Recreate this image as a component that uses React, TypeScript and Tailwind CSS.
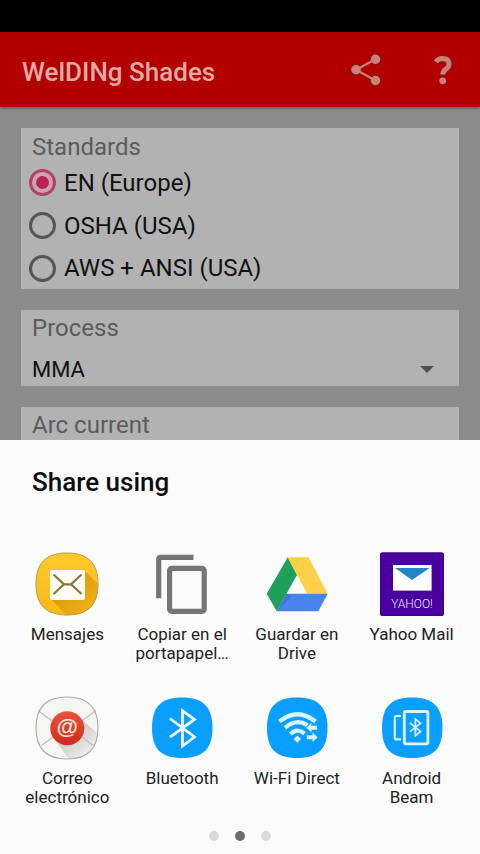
import { useState } from 'react';
import type { ReactNode } from 'react';

const SQUIRCLE = 'M32 1 C53 1 63 11 63 32 C63 53 53 63 32 63 C11 63 1 53 1 32 C1 11 11 1 32 1 Z';
const TILE = 'M32 1.5 C53 1.5 62.5 11 62.5 32 C62.5 53 53 62 32 62 C11 62 2 53 2 32 C2 11 11 1.5 32 1.5 Z';

const standards = ['EN (Europe)', 'OSHA (USA)', 'AWS + ANSI (USA)'];

function MessagesIcon() {
  return (
    <svg viewBox="0 0 64 64" className="size-16" aria-hidden="true">
      <defs>
        <clipPath id="msg-clip">
          <path d={SQUIRCLE} />
        </clipPath>
        <linearGradient id="msg-bg" x1="0" y1="0" x2="0" y2="1">
          <stop offset="0" stopColor="#fecb2c" />
          <stop offset="1" stopColor="#f7b916" />
        </linearGradient>
        <linearGradient id="msg-shade" x1="0" y1="0" x2="1" y2="1">
          <stop offset="0.3" stopColor="#dc9c0c" />
          <stop offset="1" stopColor="#f7b916" />
        </linearGradient>
      </defs>
      <path d={SQUIRCLE} fill="url(#msg-bg)" />
      <path d="M50 19 L66 35 V66 H34 L16 47 Z" fill="url(#msg-shade)" clipPath="url(#msg-clip)" />
      <path d={SQUIRCLE} fill="none" stroke="#b99a4c" strokeWidth="1" />
      <rect x="15" y="18" width="35" height="30" rx="2" fill="#fffdf3" />
      <path
        d="M18.5 22.5 L29 32.3 H36 L46.5 22.5 M29 32.3 L18.5 42 M36 32.3 L46.5 42"
        fill="none"
        stroke="#85783a"
        strokeWidth="2.2"
      />
    </svg>
  );
}

function CopyIcon() {
  return (
    <svg viewBox="0 0 64 64" className="size-16" aria-hidden="true" fill="none" stroke="#757575" strokeWidth="5.2">
      <path d="M43.5 5.3 H11 Q8.7 5.3 8.7 7.6 V46.3" />
      <rect x="19.6" y="16.4" width="34.6" height="43" rx="2.2" />
    </svg>
  );
}

function DriveIcon() {
  return (
    <svg viewBox="0 0 64 64" className="size-16" aria-hidden="true">
      <path d="M22.7 5.3 L32 23 L11.7 59.2 L1.7 41.7 Z" fill="#1fa15d" />
      <path d="M22.7 5.3 H43.5 L62.7 41.7 H42.3 Z" fill="#fecf49" />
      <path d="M21.5 41.7 H62.7 L53.3 59.2 H11.7 Z" fill="#4883ee" />
      <path d="M21.5 41.7 L27 44 L11.7 59.2 Z" fill="#2d5fc0" opacity="0.35" />
    </svg>
  );
}

function YahooIcon() {
  return (
    <svg viewBox="0 0 64 64" className="size-16" aria-hidden="true">
      <rect x="0" y="0.4" width="64" height="63.6" rx="2" fill="#4a00a0" />
      <rect x="0.7" y="1" width="62.6" height="62.4" rx="2" fill="none" stroke="#3a0580" />
      <rect x="13" y="13" width="38.6" height="25.6" fill="#fff" />
      <path d="M15 16 H49.5 L32 28 Z" fill="#1c86c8" />
      <text x="32" y="56" textAnchor="middle" fill="#f1e6fa" className="font-['Roboto'] text-[12px] font-light">
        YAHOO!
      </text>
    </svg>
  );
}

function EmailIcon() {
  return (
    <svg viewBox="0 0 64 64" className="size-16" aria-hidden="true">
      <defs>
        <clipPath id="mail-clip">
          <path d={SQUIRCLE} />
        </clipPath>
        <linearGradient id="mail-dot" x1="0" y1="0" x2="0" y2="1">
          <stop offset="0" stopColor="#e8543a" />
          <stop offset="1" stopColor="#cf2a1c" />
        </linearGradient>
        <linearGradient id="mail-shade" x1="0" y1="0" x2="1" y2="1">
          <stop offset="0.4" stopColor="#cfcfcd" />
          <stop offset="0.85" stopColor="#f5f5f4" />
        </linearGradient>
      </defs>
      <path d={SQUIRCLE} fill="#f5f5f4" />
      <path d="M46 23 L66 40 V66 H36 L20 44 Z" fill="url(#mail-shade)" clipPath="url(#mail-clip)" />
      <path d="M3 14.5 L20 27 M61 14.5 L44 27 M6.5 49.5 L22 38 M58 49.5 L43 38" stroke="#bdbdbd" strokeWidth="1.1" />
      <path d={SQUIRCLE} fill="none" stroke="#adadab" strokeWidth="1.2" />
      <circle cx="32.3" cy="32.3" r="17" fill="url(#mail-dot)" />
      <text x="32.3" y="38" textAnchor="middle" fill="#fde3dc" className="font-['Liberation_Sans'] text-[22px] font-bold">
        @
      </text>
    </svg>
  );
}

function BluetoothIcon() {
  return (
    <svg viewBox="0 0 64 64" className="size-16" aria-hidden="true">
      <path d={TILE} fill="#0a9fff" />
      <path
        d="M20 22.5 L44.5 41 L32.5 50 V14.7 L44.5 23.5 L20 41.2"
        fill="none"
        stroke="#eefaff"
        strokeWidth="2.8"
      />
    </svg>
  );
}

function WifiDirectIcon() {
  return (
    <svg viewBox="0 0 64 64" className="size-16" aria-hidden="true">
      <path d={TILE} fill="#0a9fff" />
      <g fill="none" stroke="#d9f4ff" strokeWidth="4.2">
        <path d="M14.5 25.5 Q32.3 11 50.5 25.5" />
        <path d="M20 31.8 Q31.5 22 42.5 29.2" />
        <path d="M25.5 38 Q32.3 31.5 39.5 37.6" />
      </g>
      <g fill="#d9f4ff">
        <path d="M32.3 39.5 L36 43 L32.3 46.8 L28.6 43 Z" />
        <path d="M41.3 31.7 L46.5 27 V29.7 H52 V33.7 H46.5 V36.4 Z" />
        <path d="M52.7 41.3 L47.5 36.6 V39.3 H41.8 V43.3 H47.5 V46 Z" />
      </g>
    </svg>
  );
}

function BeamIcon() {
  return (
    <svg viewBox="0 0 64 64" className="size-16" aria-hidden="true">
      <path d={TILE} fill="#0a9fff" />
      <g fill="none" stroke="#d9f4ff">
        <rect x="24.3" y="15.5" width="23.6" height="32.4" rx="1.8" strokeWidth="2.8" />
        <path d="M21 20 H16.5 Q14.8 20 14.8 21.7 V41.7 Q14.8 43.4 16.5 43.4 H21" strokeWidth="2.2" />
        <path d="M30 27 L40.5 35.4 L35.4 39.7 V23 L40.5 27.2 L30 35.6" strokeWidth="1.7" />
      </g>
    </svg>
  );
}

function AppBar() {
  return (
    <header className="relative z-10 flex h-[75px] shrink-0 items-center bg-[#b20000] pr-5 pl-[22px] shadow-[0_1px_3px_rgba(0,0,0,0.4)]">
      <h1 className="flex-1 pt-1 text-[26px] leading-8 font-medium text-[#dfaaa3]">WelDINg Shades</h1>
      <button type="button" aria-label="Share" className="mr-10 size-9">
        <svg viewBox="0 0 36 36" className="size-9">
          <g stroke="#7d1a15" strokeWidth="1.6" fill="#cf7d76">
            <circle cx="27.5" cy="7.3" r="5.2" />
            <circle cx="8" cy="17.7" r="5.2" />
            <circle cx="27.5" cy="28.5" r="5.2" />
          </g>
          <path d="M27.5 7.3 L8 17.7 L27.5 28.5" fill="none" stroke="#cf7d76" strokeWidth="2.4" />
          <g fill="#cf7d76">
            <circle cx="27.5" cy="7.3" r="4.7" />
            <circle cx="8" cy="17.7" r="4.7" />
            <circle cx="27.5" cy="28.5" r="4.7" />
          </g>
        </svg>
      </button>
      <button type="button" aria-label="Help" className="size-9">
        <svg viewBox="0 0 36 36" className="size-9" fill="none">
          <path d="M11.5 10 Q14 6.6 18.3 6.6 Q25 6.6 25 12 Q25 15 22 17 Q18.8 19.3 18.8 23" stroke="#7d1a15" strokeWidth="6.8" />
          <circle cx="18.7" cy="28.8" r="4.3" fill="#7d1a15" />
          <path d="M12 10 Q14 6.6 18.3 6.6 Q25 6.6 25 12 Q25 15 22 17 Q18.8 19.3 18.8 22.6" stroke="#cf7d76" strokeWidth="5" />
          <circle cx="18.7" cy="28.8" r="3.4" fill="#cf7d76" />
        </svg>
      </button>
    </header>
  );
}

const targets: { name: string; lines: string[]; icon: ReactNode }[] = [
  { name: 'messages', lines: ['Mensajes'], icon: <MessagesIcon /> },
  { name: 'clipboard', lines: ['Copiar en el', 'portapapel…'], icon: <CopyIcon /> },
  { name: 'drive', lines: ['Guardar en', 'Drive'], icon: <DriveIcon /> },
  { name: 'yahoo', lines: ['Yahoo Mail'], icon: <YahooIcon /> },
  { name: 'email', lines: ['Correo', 'electrónico'], icon: <EmailIcon /> },
  { name: 'bluetooth', lines: ['Bluetooth'], icon: <BluetoothIcon /> },
  { name: 'wifi', lines: ['Wi-Fi Direct'], icon: <WifiDirectIcon /> },
  { name: 'beam', lines: ['Android', 'Beam'], icon: <BeamIcon /> },
];

function ShareSheet() {
  const page = 1;

  return (
    <section className="relative z-20 shrink-0 bg-[#fbfbfb] pt-[26px] pr-[11px] pb-[13px] pl-[10px]">
      <h2 className="pl-[22px] text-[26px] leading-8 font-medium text-[#0c0c0c]">Share using</h2>
      <div className="mt-[54px] grid grid-cols-4 gap-y-[33px]">
        {targets.map((target) => (
          <button key={target.name} type="button" className="flex flex-col items-center">
            {target.icon}
            <span className="mt-[9px] block h-[38px] text-[17px] leading-[19px] text-[#222]">
              {target.lines.map((line) => (
                <span key={line} className="block">
                  {line}
                </span>
              ))}
            </span>
          </button>
        ))}
      </div>
      <div className="mt-6 flex justify-center gap-4">
        {[0, 1, 2].map((dot) => (
          <span key={dot} className={`size-[10px] rounded-full ${dot === page ? 'bg-[#6b6b6b]' : 'bg-[#dadada]'}`} />
        ))}
      </div>
    </section>
  );
}

export default function App() {
  const [standard, setStandard] = useState(standards[0]);

  return (
    <div className="flex h-screen flex-col overflow-hidden bg-[#8b8b8b] font-['Roboto',sans-serif]">
      <div className="h-8 shrink-0 bg-black" />
      <AppBar />

      <main className="flex min-h-0 flex-1 flex-col gap-[21px] overflow-hidden p-[21px] pb-0">
        <fieldset className="shrink-0 bg-[#b2b2b2] pt-[5px]">
          <legend className="float-left w-full pl-[11px] text-[24px] leading-7 text-[#5c5c5c]">Standards</legend>
          {standards.map((name) => (
            <label key={name} className="clear-both flex h-[43px] items-center gap-2 pl-2 text-[24px] leading-8 text-[#111] last:h-[42px]">
              <input
                type="radio"
                name="standard"
                checked={standard === name}
                onChange={() => setStandard(name)}
                className="grid size-[27px] appearance-none place-items-center rounded-full border-3 border-[#555] checked:border-[#b04468] checked:bg-[#d3a0b0] checked:before:size-[13px] checked:before:rounded-full checked:before:bg-[#bb2257] checked:before:content-['']"
              />
              {name}
            </label>
          ))}
        </fieldset>

        <section className="shrink-0 bg-[#b2b2b2] pt-1">
          <label htmlFor="process" className="block pl-[11px] text-[24px] leading-7 text-[#5c5c5c]">
            Process
          </label>
          <div className="relative mt-3">
            <select id="process" className="block h-8 w-full appearance-none bg-transparent pl-[11px] text-[22px] leading-8 text-[#111]">
              <option>MMA</option>
            </select>
            <svg viewBox="0 0 14 7" className="pointer-events-none absolute top-3 right-[25px] h-[7px] w-[14px]" fill="#505050">
              <path d="M0 0 H14 L7 7 Z" />
            </svg>
          </div>
        </section>

        <section className="h-[76px] shrink-0 bg-[#b2b2b2] pt-1">
          <h3 className="pl-[11px] text-[24px] leading-7 text-[#5c5c5c]">Arc current</h3>
        </section>
      </main>

      <ShareSheet />
    </div>
  );
}
